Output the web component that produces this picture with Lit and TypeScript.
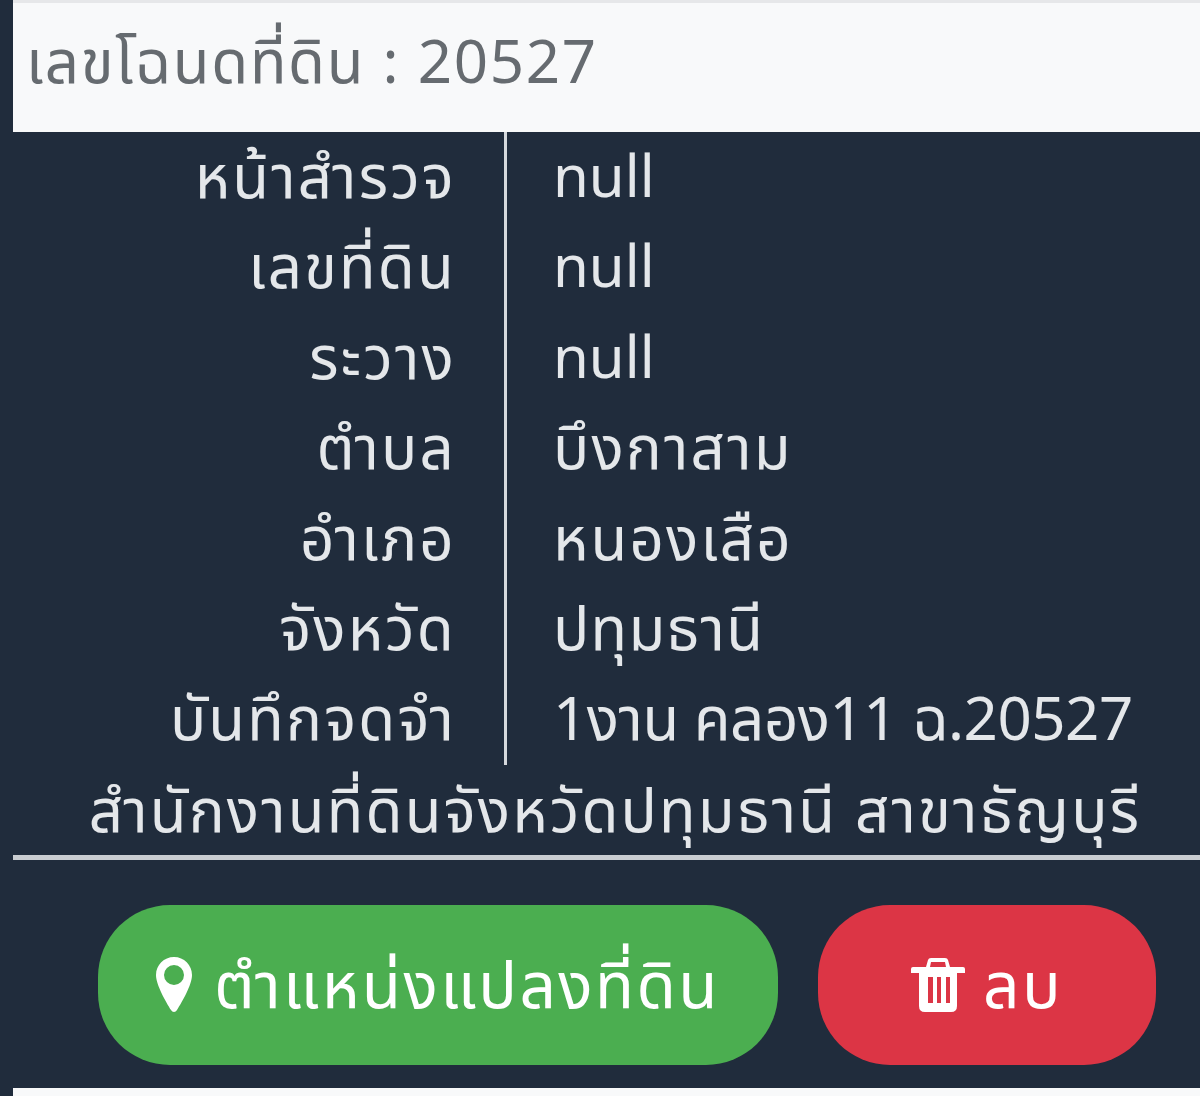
import { LitElement, html, css } from "lit";
import { customElement } from "lit/decorators.js";

const rows: [string, string, string][] = [
  ["หน้าสำรวจ", "null", "lat"],
  ["เลขที่ดิน", "null", "lat"],
  ["ระวาง", "null", "lat"],
  ["ตำบล", "บึงกาสาม", ""],
  ["อำเภอ", "หนองเสือ", ""],
  ["จังหวัด", "ปทุมธานี", "tight"],
  ["บันทึกจดจำ", "1งาน คลอง11 ฉ.20527", "memo"],
];

@customElement("app-root")
export class AppRoot extends LitElement {
  static styles = css`
    :host {
      display: block;
      width: 1200px;
      height: 1096px;
      overflow: hidden;
      background: #202c3c;
      font-family: "Noto Sans Thai", "Noto Sans", "Liberation Sans", sans-serif;
      font-weight: 400;
      color: #e4e7ea;
    }
    .card {
      padding-left: 13px;
      display: flex;
      flex-direction: column;
      filter: blur(0.7px);
    }
    .head {
      height: 132px;
      box-sizing: border-box;
      background: #f8f9fa;
      border-top: 3px solid #e6e7e9;
      color: #666b70;
      font-size: 60px;
      line-height: 124px;
      padding-left: 13px;
      white-space: nowrap;
      letter-spacing: 1.7px;
    }
    .table {
      display: grid;
      grid-template-columns: 443px 97px 1fr;
    }
    .label, .value {
      height: 90.4px;
      line-height: 95px;
      font-size: 60px;
      white-space: nowrap;
      letter-spacing: 2.2px;
    }
    .label {
      grid-column: 1;
      text-align: right;
    }
    .value {
      grid-column: 3;
    }
    .value.lat {
      font-size: 58px;
      letter-spacing: 0;
    }
    .value.tight { letter-spacing: 1.3px; }
    .value.memo { letter-spacing: -0.5px; }
    .divider {
      grid-column: 2;
      grid-row: 1 / span 7;
      justify-self: start;
      width: 3px;
      margin-left: 48px;
      background: #d5d9dd;
    }
    .office {
      height: 90px;
      line-height: 98px;
      font-size: 60px;
      letter-spacing: 2.2px;
      text-align: center;
      white-space: nowrap;
      padding-left: 30px;
      margin-right: 13px;
    }
    .rule {
      height: 5px;
      background: #c9cdd1;
    }
    .actions {
      display: flex;
      gap: 40px;
      margin-top: 45px;
      padding-left: 85px;
    }
    .btn {
      height: 160px;
      border-radius: 72px;
      display: flex;
      align-items: center;
      justify-content: center;
      gap: 22px;
      color: #fff;
      font-size: 64px;
      letter-spacing: 2.4px;
      white-space: nowrap;
    }
    .btn span {
      padding-top: 8px;
    }
    .green { width: 680px; background: #4bae50; }
    .red { width: 338px; background: #dc3545; gap: 18px; }
    .btn svg { flex: none; fill: #fff; }
    .bottom {
      margin-top: 23px;
      height: 20px;
      background: #f8f9fa;
    }
  `;

  render() {
    return html`
      <div class="card">
        <div class="head">เลขโฉนดที่ดิน : 20527</div>
        <div class="table">
          ${rows.map(
            ([k, v, c]) => html`<div class="label">${k}</div><div class="value ${c}">${v}</div>`
          )}
          <div class="divider"></div>
        </div>
        <div class="office">สำนักงานที่ดินจังหวัดปทุมธานี สาขาธัญบุรี</div>
        <div class="rule"></div>
        <div class="actions">
          <div class="btn green">
            <svg width="36" height="55" viewBox="0 0 36 55">
              <path fill-rule="evenodd" d="M18 0C8 0 0 8 0 18c0 10 10 27 15 35 1.500 2.500 4.500 2.500 6 0 5-8 15-25 15-35C36 8 28 0 18 0zM18 8a10 10 0 1 1 0 20 10 10 0 0 1 0-20z"/>
            </svg>
            <span>ตำแหน่งแปลงที่ดิน</span>
          </div>
          <div class="btn red">
            <svg width="54" height="54" viewBox="0 0 54 54">
              <path fill-rule="evenodd" d="M15 9L17 2Q17.500 0 20 0H34Q36.500 0 37 2L39 9H52Q54 9 54 11V15H46V48Q46 54 40 54H14Q8 54 8 48V15H0V11Q0 9 2 9ZM19 9H35L34 4H20ZM17 19V45H22V19ZM26 19V45H30V19ZM35 19V45H39V19Z"/>
            </svg>
            <span>ลบ</span>
          </div>
        </div>
        <div class="bottom"></div>
      </div>
    `;
  }
}
